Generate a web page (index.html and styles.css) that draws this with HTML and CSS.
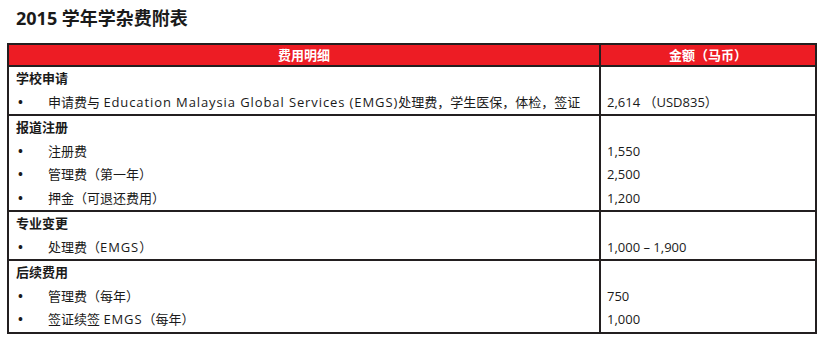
FILE: index.html
```html
<!DOCTYPE html>
<html lang="zh">
<head>
<meta charset="utf-8">
<link rel="stylesheet" href="styles.css">
</head>
<body>
<h1 class="title">2015 学年学杂费附表</h1>
<table class="fees">
  <thead>
    <tr><th class="col-item">费用明细</th><th class="col-amt">金额（马币）</th></tr>
  </thead>
  <tbody>
    <tr>
      <td class="col-item">
        <div class="cat">学校申请</div>
        <div class="item"><span class="dot">•</span><span>申请费与 <span class="lat">Education Malaysia Global Services (EMGS)</span>处理费，学生医保，体检，签证</span></div>
      </td>
      <td class="col-amt"><div class="line"></div><div class="line">2,614 （USD835）</div></td>
    </tr>
    <tr>
      <td class="col-item">
        <div class="cat">报道注册</div>
        <div class="item"><span class="dot">•</span>注册费</div>
        <div class="item"><span class="dot">•</span>管理费（第一年）</div>
        <div class="item"><span class="dot">•</span>押金（可退还费用）</div>
      </td>
      <td class="col-amt"><div class="line"></div><div class="line">1,550</div><div class="line">2,500</div><div class="line">1,200</div></td>
    </tr>
    <tr>
      <td class="col-item">
        <div class="cat">专业变更</div>
        <div class="item"><span class="dot">•</span><span>处理费（<span class="lat">EMGS</span>）</span></div>
      </td>
      <td class="col-amt"><div class="line"></div><div class="line">1,000 – 1,900</div></td>
    </tr>
    <tr>
      <td class="col-item">
        <div class="cat">后续费用</div>
        <div class="item"><span class="dot">•</span>管理费（每年）</div>
        <div class="item"><span class="dot">•</span><span>签证续签 <span class="lat">EMGS</span>（每年）</span></div>
      </td>
      <td class="col-amt"><div class="line"></div><div class="line">750</div><div class="line">1,000</div></td>
    </tr>
  </tbody>
</table>
</body>
</html>
```
FILE: styles.css
```css
html, body {
  margin: 0;
  padding: 0;
  background: #ffffff;
}
body {
  font-family: "Open Sans", "Noto Sans CJK SC", sans-serif;
  color: #1a1a1a;
}
.title {
  margin: 0;
  padding: 6px 0 0 16px;
  height: 43px;
  box-sizing: border-box;
  font-size: 18px;
  line-height: 24px;
  font-weight: 700;
}
.fees {
  margin-left: 7px;
  width: 810px;
  border-collapse: collapse;
  border: 2px solid #231f20;
  font-size: 13px;
  line-height: 23.5px;
}
.fees th, .fees td {
  border: 2px solid #231f20;
  padding: 0;
  vertical-align: top;
}
.fees th {
  background: #ed1c24;
  color: #ffffff;
  font-weight: 700;
  text-align: center;
  height: 20px;
  line-height: 20px;
}
.fees td.col-item {
  width: 583px;
  padding-left: 7px;
}
.fees td.col-amt {
  padding-left: 6px;
}
.line {
  height: 23.5px;
}
.cat {
  font-weight: 700;
}
.item {
  display: flex;
}
.dot {
  width: 32px;
  padding-left: 2px;
  box-sizing: border-box;
  font-weight: 700;
}
.lat {
  letter-spacing: 0.9px;
}
```
